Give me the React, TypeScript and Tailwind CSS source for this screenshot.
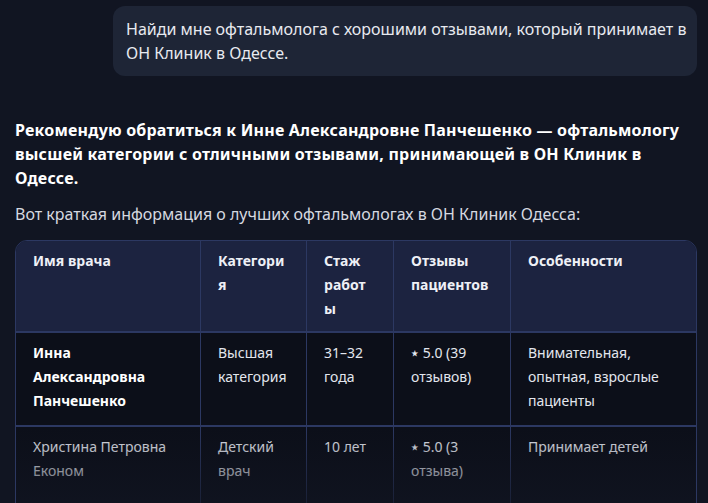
const rows = [
  {
    name: 'Инна Александровна Панчешенко',
    category: 'Высшая категория',
    exp: '31–32 года',
    reviews: '⭑ 5.0 (39 отзывов)',
    notes: 'Внимательная, опытная, взрослые пациенты',
  },
  {
    name: 'Христина Петровна Економ',
    category: 'Детский врач',
    exp: '10 лет',
    reviews: '⭑ 5.0 (3 отзыва)',
    notes: 'Принимает детей',
  },
];

const headers = ['Имя врача', 'Категория', 'Стаж работы', 'Отзывы пациентов', 'Особенности'];

export default function App() {
  return (
    <div className="w-[708px] h-[503px] overflow-hidden bg-[#111522] text-[#e5e7eb] font-['Noto_Sans','Liberation_Sans',sans-serif] pl-[15px] pr-[11px] pt-[6px]">
      {/* User message */}
      <div className="flex justify-end">
        <div className="w-[584px] bg-[#1e2536] rounded-xl pl-[13px] pr-[8px] py-[11px] text-[16px] leading-6 text-[#e8eaf0]">
          Найди мне офтальмолога с хорошими отзывами, который принимает в ОН Клиник в Одессе.
        </div>
      </div>

      {/* Assistant answer */}
      <p className="mt-[42px] text-[16px] leading-6 font-bold tracking-[0.2px] text-white">
        Рекомендую обратиться к Инне Александровне Панчешенко — офтальмологу высшей категории с отличными отзывами, принимающей в ОН Клиник в Одессе.
      </p>
      <p className="mt-[12px] text-[16px] leading-6 text-[#d6d9e0]">
        Вот краткая информация о лучших офтальмологах в ОН Клиник Одесса:
      </p>

      <div className="relative mt-[14px] w-[682px] rounded-t-xl border border-[#2c3862] overflow-hidden bg-[#0c0f19] text-[14px] leading-6">
        <div className="grid grid-cols-[185px_106px_87px_117px_185px] bg-[#1c2340] border-b-2 border-[#2c3862]">
          {headers.map((h, i) => (
            <div
              key={h}
              className={`pt-[8px] pb-[12px] pl-[17px] pr-[16px] h-[90px] font-bold text-[#eef0f6] [overflow-wrap:anywhere] ${i < 4 ? 'border-r border-[#2c3862]' : ''}`}
            >
              {h}
            </div>
          ))}
        </div>
        {rows.map((r, ri) => (
          <div
            key={r.name}
            className={`grid grid-cols-[185px_106px_87px_117px_185px] ${ri === 0 ? 'border-b-2 border-[#2c3862]' : ''}`}
          >
            {[r.name, r.category, r.exp, r.reviews, r.notes].map((c, i) => (
              <div
                key={i}
                className={`pt-[8px] pb-[12px] pl-[17px] pr-[16px] ${ri === 0 ? 'min-h-[92px]' : 'min-h-[110px]'} text-[#e3e6ee] ${i === 0 && ri === 0 ? 'font-bold text-white' : ''} ${i < 4 ? 'border-r border-[#2c3862]' : ''}`}
              >
                {c}
              </div>
            ))}
          </div>
        ))}
        <div className="absolute left-0 right-0 bottom-0 h-[110px] bg-gradient-to-b from-transparent to-[#111522] pointer-events-none" />
      </div>
    </div>
  );
}
